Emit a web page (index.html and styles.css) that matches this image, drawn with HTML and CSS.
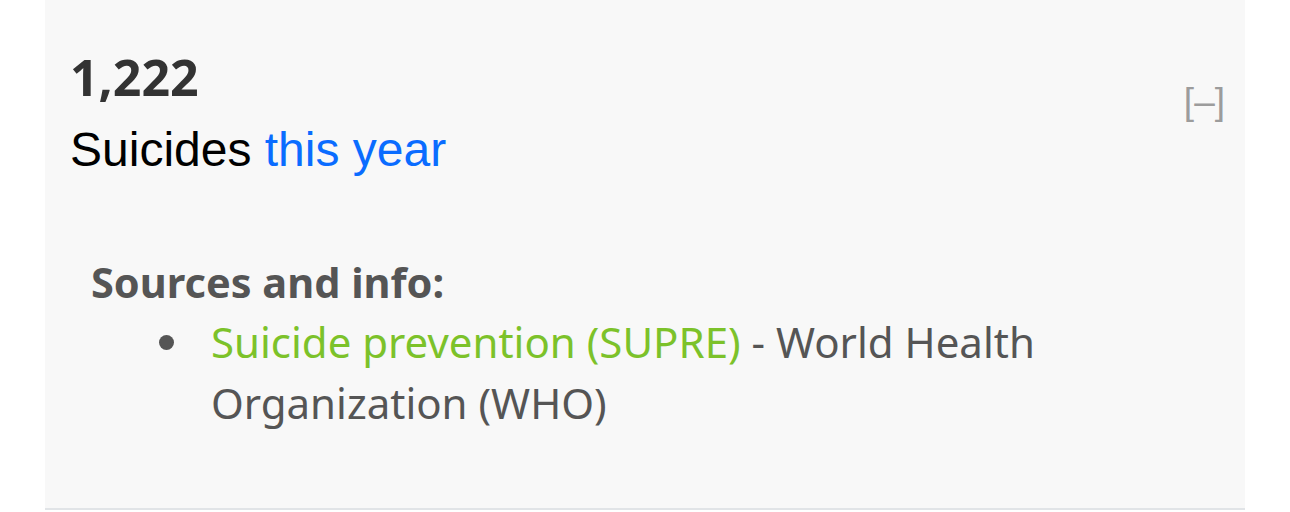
FILE: index.html
```html
<!DOCTYPE html>
<html>
<head>
<meta charset="utf-8">
<link rel="stylesheet" href="styles.css">
</head>
<body>
<div class="panel">
  <div class="head">
    <div class="stat">
      <div class="count">1,222</div>
      <div class="label">Suicides <a class="period" href="#">this year</a></div>
    </div>
    <span class="toggle">[–]</span>
  </div>
  <div class="sources">
    <div class="sources-title">Sources and info:</div>
    <ul class="sources-list">
      <li class="source-item"><span class="source-text"><a class="src-link" href="#">Suicide prevention (SUPRE)</a> - World Health Organization (WHO)</span></li>
    </ul>
  </div>
</div>
</body>
</html>
```
FILE: styles.css
```css
html, body {
  margin: 0;
  padding: 0;
  background: #ffffff;
}
.panel {
  margin-left: 45px;
  width: 1200px;
  height: 510px;
  box-sizing: border-box;
  background: #f8f8f8;
  border-bottom: 2px solid #e1e4e7;
  padding: 47px 20px 0 25px;
}
.head {
  display: flex;
  justify-content: space-between;
  align-items: flex-start;
}
.count {
  font-family: "Noto Sans", "Open Sans", sans-serif;
  font-weight: 700;
  font-size: 50px;
  line-height: 60px;
  color: #333333;
}
.label {
  margin-top: 13px;
  font-family: "Liberation Sans", Arial, sans-serif;
  font-size: 48px;
  line-height: 60px;
  color: #000000;
}
.period {
  color: #0a6cff;
  text-decoration: none;
}
.toggle {
  margin-top: 35px;
  font-family: "Liberation Sans", Arial, sans-serif;
  font-size: 37px;
  line-height: 40px;
  color: #9c9c9c;
}
.sources {
  margin-top: 77px;
  padding-left: 21px;
  font-family: "Noto Sans", "Open Sans", sans-serif;
  color: #555555;
}
.sources-title {
  font-weight: 700;
  font-size: 41.5px;
  line-height: 50px;
}
.sources-list {
  list-style: none;
  margin: 4px 0 0;
  padding-left: 68px;
  font-size: 42px;
  line-height: 61px;
}
.source-item {
  display: flex;
  align-items: flex-start;
}
.source-item::before {
  content: "";
  flex: 0 0 15px;
  width: 15px;
  height: 15px;
  margin-top: 24px;
  margin-right: 37px;
  border-radius: 50%;
  background: #555555;
}
.src-link {
  color: #7cc22a;
  text-decoration: none;
}
```
